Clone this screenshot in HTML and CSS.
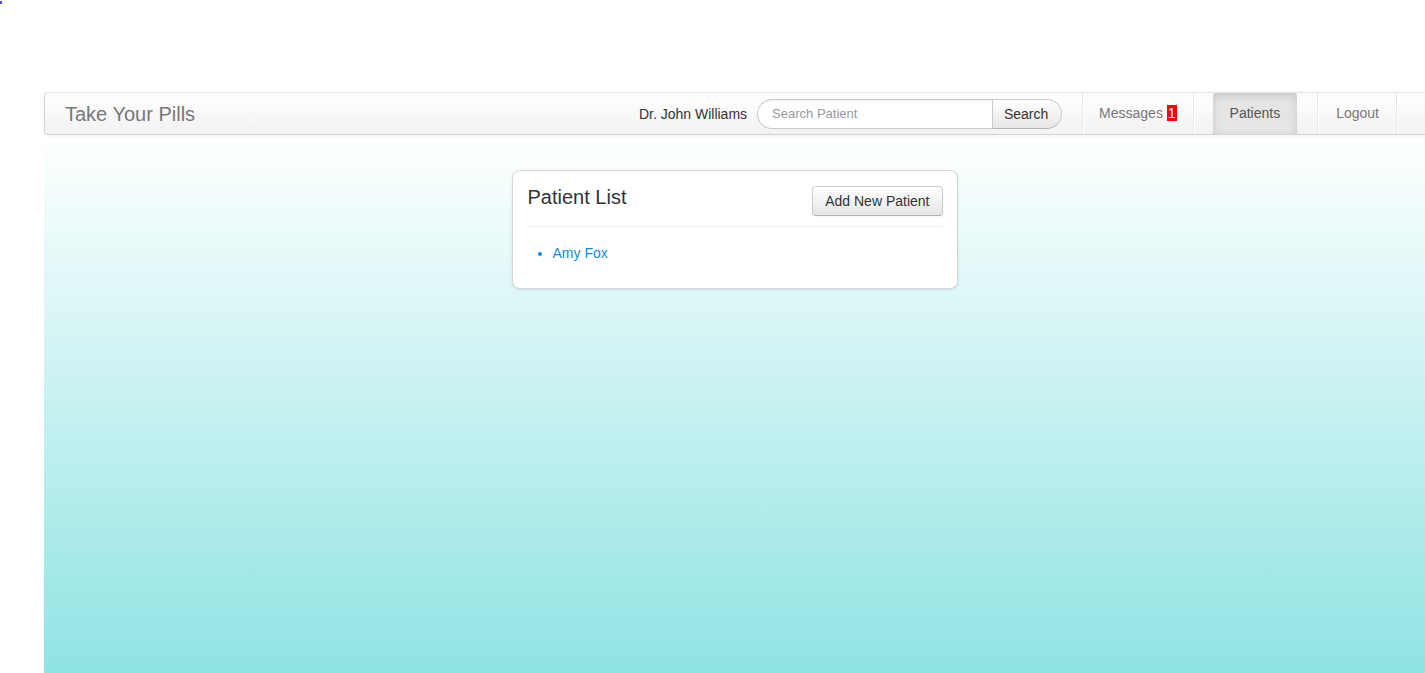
FILE: index.html
```html
<!DOCTYPE html>
<html lang="en">
<head>
<meta charset="utf-8">
<title>Take Your Pills</title>
<link rel="stylesheet" href="styles.css">
</head>
<body>
<div class="corner-mark"></div>
<header class="navbar">
  <a class="brand" href="#">Take Your Pills</a>
  <div class="nav-right">
    <span class="doctor">Dr. John Williams</span>
    <form class="search">
      <input class="search-input" type="text" placeholder="Search Patient">
      <button class="search-btn" type="button">Search</button>
    </form>
    <ul class="nav">
      <li class="divider"></li>
      <li class="nav-item"><a href="#">Messages <span class="badge">1</span></a></li>
      <li class="divider"></li>
      <li class="nav-item active"><a href="#">Patients</a></li>
      <li class="divider"></li>
      <li class="nav-item logout"><a href="#">Logout</a></li>
      <li class="divider"></li>
    </ul>
  </div>
</header>
<main class="main">
  <section class="card">
    <div class="card-head">
      <h2 class="card-title">Patient List</h2>
      <button class="btn" type="button">Add New Patient</button>
    </div>
    <hr class="rule">
    <ul class="patients">
      <li><a href="#">Amy Fox</a></li>
    </ul>
  </section>
</main>
</body>
</html>
```

FILE: styles.css
```css
html, body {
  margin: 0;
  padding: 0;
}
body {
  height: 100vh;
  overflow: hidden;
  display: flex;
  flex-direction: column;
  font-family: "Liberation Sans", Arial, sans-serif;
  font-size: 14px;
  color: #333;
  background: #fff;
}
a { text-decoration: none; }

.corner-mark {
  width: 2px;
  height: 3px;
  margin-top: 1px;
  background: #4a4af0;
  flex: none;
}

.navbar {
  flex: none;
  margin: 88px 0 0 44px;
  height: 41px;
  display: flex;
  align-items: center;
  justify-content: space-between;
  background: linear-gradient(#ffffff, #f2f2f2);
  border: 1px solid #d4d4d4;
  border-right: none;
  border-top-color: #e6e6e6;
  border-radius: 4px 0 0 4px;
  box-shadow: 0 1px 4px rgba(0,0,0,0.06);
  position: relative;
  z-index: 1;
}
.brand {
  padding-left: 20px;
  font-size: 20px;
  color: #777;
  line-height: 20px;
}
.nav-right {
  display: flex;
  align-items: center;
  height: 100%;
  padding-right: 27px;
}
.doctor {
  color: #333;
  margin-right: 10px;
}
.search {
  display: flex;
  margin: 0;
  height: 30px;
}
.search-input {
  box-sizing: border-box;
  width: 235px;
  height: 30px;
  margin: 0;
  padding: 0 14px;
  border: 1px solid #ccc;
  border-right: none;
  border-radius: 15px 0 0 15px;
  font-family: inherit;
  font-size: 13px;
  color: #555;
  background: #fff;
  box-shadow: inset 0 1px 1px rgba(0,0,0,0.075);
  outline: none;
}
.search-input::placeholder { color: #999; }
.search-btn {
  box-sizing: border-box;
  width: 70px;
  height: 30px;
  margin: 0;
  padding: 0 8px 0 6px;
  border: 1px solid #ccc;
  border-bottom-color: #b3b3b3;
  border-radius: 0 15px 15px 0;
  background: linear-gradient(#ffffff, #e6e6e6);
  font-family: inherit;
  font-size: 14px;
  color: #333;
}
.nav {
  list-style: none;
  margin: 0 0 0 20px;
  padding: 0;
  display: flex;
  align-items: stretch;
  height: 100%;
}
.divider {
  width: 0;
  border-left: 1px solid #e8e8e8;
  border-right: 1px solid #ffffff;
}
.nav-item a {
  display: block;
  height: 100%;
  box-sizing: border-box;
  padding: 10px 15px;
  line-height: 20px;
  color: #777;
}
.nav-item:nth-child(2) a { padding-right: 16px; }
.nav-item.logout a { padding: 10px 17px; }
.nav-item.active {
  margin: 0 20px 0 18px;
}
.nav-item.active a {
  padding: 10px 17px;
  color: #555;
  background: #e5e5e5;
  border-radius: 3px 3px 0 0;
  box-shadow: inset 0 3px 8px rgba(0,0,0,0.125);
}
.badge {
  display: inline-block;
  background: #ff0000;
  color: #fff;
  line-height: 16px;
  padding: 0 1px;
  vertical-align: 0;
}

.main {
  flex: 1;
  margin-left: 44px;
  background: linear-gradient(#ffffff, #8fe3e3);
  display: flex;
  justify-content: center;
  align-items: flex-start;
}
.card {
  box-sizing: border-box;
  width: 446px;
  margin-top: 35px;
  padding: 15px 14px 15px 15px;
  background: #fff;
  border: 1px solid #d8d8d8;
  border-radius: 8px;
  box-shadow: 0 1px 3px rgba(0,0,0,0.1);
}
.card-head {
  display: flex;
  justify-content: space-between;
  align-items: flex-start;
}
.card-title {
  margin: 0;
  font-size: 20px;
  font-weight: normal;
  line-height: 22px;
  color: #333;
}
.btn {
  box-sizing: border-box;
  height: 30px;
  padding: 0 12px;
  border: 1px solid #ccc;
  border-bottom-color: #b3b3b3;
  border-radius: 4px;
  background: linear-gradient(#ffffff, #e6e6e6);
  font-family: inherit;
  font-size: 14px;
  color: #333;
  box-shadow: inset 0 1px 0 rgba(255,255,255,0.2), 0 1px 2px rgba(0,0,0,0.05);
}
.rule {
  margin: 10px 0 0 0;
  border: 0;
  border-top: 1px solid #eee;
}
.patients {
  margin: 16px 0 10px 0;
  padding-left: 25px;
  line-height: 20px;
  color: #0e8ed6;
}
.patients a { color: #0e8ed6; }
```
